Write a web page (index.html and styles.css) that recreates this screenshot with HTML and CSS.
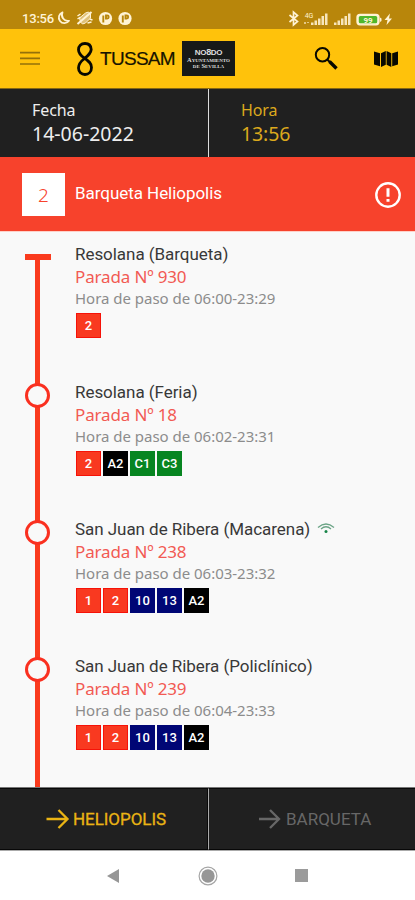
FILE: index.html
```
<!DOCTYPE html>
<html lang="es">
<head>
<meta charset="utf-8">
<title>TUSSAM</title>
<link rel="stylesheet" href="styles.css">
</head>
<body>
<div class="status">
  <span class="clock">13:56</span>
  <svg class="status-left" width="80" height="16" viewBox="0 0 80 16">
    <path d="M6.500 2.300A5.600 5.600 0 1 0 13 10.800 6 6 0 0 1 6.500 2.300z" fill="none" stroke="#fff3d5" stroke-width="1.800" stroke-linejoin="round"/>
    <g transform="translate(20.500 0)" fill="none" stroke="#fff3d5"><path d="M3 8l6-5 3-1 2 2v4l-5 5-3 1-2-2z" fill="#fff3d5" fill-opacity=".55" stroke-width="1"/><path d="M1 14L15 2" stroke-width="2"/><path d="M1 6l3-2M1 9l3-2M11 13l4-1M13 9l3 1" stroke-width="1.500"/></g>
    <circle cx="49.500" cy="8.500" r="6.600" fill="#fff3d5"/><path d="M47.300 12.500V5.500M50 5.500h1.200a1.500 1.500 0 0 1 0 3H50z" fill="none" stroke="#b8860b" stroke-width="1.900"/>
    <circle cx="69" cy="8.500" r="6.600" fill="#fff3d5"/><path d="M66.800 12.500V5.500M69.500 5.500h1.200a1.500 1.500 0 0 1 0 3h-1.200z" fill="none" stroke="#b8860b" stroke-width="1.900"/>
  </svg>
  <svg class="status-right" width="110" height="18" viewBox="0 0 110 18">
    <path d="M1.500 6l8 6.500L5.500 16V3l4 3.500-8 6.500" fill="none" stroke="#fff3d5" stroke-width="1.700"/>
    <g fill="#fff3d5"><path d="M23 13.500h2.500V16H23zM26.500 11.500H29V16h-2.500zM30 9.500h2.500V16H30zM33.500 7H36v9h-2.500zM37 4.500h2.500V16H37zM46 13.500h2.500V16H46zM49.500 11.500H52V16h-2.500zM53 9.500h2.500V16H53zM56.500 7H59v9h-2.500zM60 4.500h2.500V16H60z" opacity=".88"/>
    <text x="21" y="9" class="network">4G</text><path d="M16 13h2v2h-2zM19 13h2v1h-2z" opacity=".6"/></g>
    <rect x="69" y="5.300" width="22" height="10.500" rx="3" fill="#fff3d5" stroke="#fff3d5" stroke-width="1.300"/><path d="M92 8.500l1.500 1v2.500l-1.500 1z" fill="#fff3d5"/><rect x="70.800" y="6.900" width="18.400" height="7.300" rx="1.500" fill="#4fb72b"/><text x="80" y="13.500" class="charge">99</text>
    <path d="M102 4.500l-5.500 6.500h3l-1 5 5.500-6.500h-3z" fill="#fff3d5"/>
  </svg>
</div>
<header class="appbar">
  <svg class="menu" width="20" height="16" viewBox="0 0 20 16"><path d="M0 1.700h20M0 7.300h20M0 13h20" stroke="#94710a" stroke-width="1.700"/></svg>
  <svg class="mark" width="18" height="36" viewBox="0 0 18 36"><path d="M15.200 8.500C15 4.500 12.500 2.500 9 2.500c-4 0-6.500 2.500-6.500 6.200 0 4 2.500 6 6 8.500 4 2.800 7 5 7 9.300S12.500 33.500 9 33.500s-6.500-2.500-6.500-6.500 2.700-7 6-9.500c4-3 6.300-5 6.700-9z" fill="none" stroke="#080800" stroke-width="2.800"/></svg>
  <span class="brand">TUSSAM</span>
  <div class="council"><b>NO<span class="skein">8</span>DO</b><span>Ayuntamiento</span><span>de Sevilla</span></div>
  <svg class="search" width="26" height="26" viewBox="0 0 26 26"><circle cx="8.500" cy="8.800" r="6.700" fill="none" stroke="#080800" stroke-width="2"/><path d="M13.300 13.500l3 3" stroke="#080800" stroke-width="2"/><path d="M15.500 15.500l7 7" stroke="#080800" stroke-width="3.400"/></svg>
  <svg class="map" width="24" height="18" viewBox="0 0 24 18"><path d="M0 1.500l6 1.700v13L0 14.500zM7 3.200l4.800-2.200v13.700L7 16.900zM12.600 1l4.700 2.200v13.700l-4.700-2.200zM18.200 3.200l5.800-1.700v13l-5.800 1.700z" fill="#080800"/></svg>
</header>
<section class="moment">
  <div><span class="label">Fecha</span><span class="value date">14-06-2022</span></div>
  <div class="gold"><span class="label">Hora</span><span class="value">13:56</span></div>
</section>
<section class="line">
  <span class="number">2</span><span class="route">Barqueta Heliopolis</span>
  <svg width="28" height="28" viewBox="0 0 28 28"><circle cx="14" cy="14" r="11.700" fill="none" stroke="#fff" stroke-width="2.400"/><path d="M14 7.200v8.500M14 17.900v2.800" stroke="#fff" stroke-width="3"/></svg>
</section>
<main class="stops">
  <article class="stop first"><div class="track"><i></i></div><div class="info">
    <h2>Resolana (Barqueta)</h2><p class="parada">Parada Nº 930</p><p class="hours">Hora de paso de 06:00-23:29</p>
    <div class="tags"><b>2</b></div></div></article>
  <article class="stop"><div class="track"><i></i></div><div class="info">
    <h2>Resolana (Feria)</h2><p class="parada">Parada Nº 18</p><p class="hours">Hora de paso de 06:02-23:31</p>
    <div class="tags"><b>2</b><b class="black">A2</b><b class="green">C1</b><b class="green">C3</b></div></div></article>
  <article class="stop"><div class="track"><i></i></div><div class="info">
    <h2>San Juan de Ribera (Macarena)<svg class="wifi" width="18" height="14" viewBox="0 0 18 14"><path d="M1 5.500Q9-1.500 17 5.500M4 7q5-4.500 10 0" fill="none" stroke="#6ba486" stroke-width="1.300"/><circle cx="9" cy="9.500" r="1.500" fill="#168447"/></svg></h2><p class="parada">Parada Nº 238</p><p class="hours">Hora de paso de 06:03-23:32</p>
    <div class="tags"><b>1</b><b>2</b><b class="navy">10</b><b class="navy">13</b><b class="black">A2</b></div></div></article>
  <article class="stop last"><div class="track"><i></i></div><div class="info">
    <h2>San Juan de Ribera (Policlínico)</h2><p class="parada">Parada Nº 239</p><p class="hours">Hora de paso de 06:04-23:33</p>
    <div class="tags"><b>1</b><b>2</b><b class="navy">10</b><b class="navy">13</b><b class="black">A2</b></div></div></article>
</main>
<nav class="directions">
  <div class="active"><svg width="24" height="22" viewBox="0 0 24 22"><path d="M.5 11h20.500M12.500 2l9 9-9 9" fill="none" stroke="currentColor" stroke-width="2.300"/></svg><span>HELIOPOLIS</span></div>
  <div><svg width="24" height="22" viewBox="0 0 24 22"><path d="M0 11h20.500M11 2l9 9-9 9" fill="none" stroke="currentColor" stroke-width="2.300"/></svg><span>BARQUETA</span></div>
</nav>
<footer class="system">
  <svg width="13" height="16" viewBox="0 0 13 16"><path d="M0 8L12 1v14z" fill="#969696"/></svg>
  <svg width="20" height="20" viewBox="0 0 20 20"><circle cx="10" cy="10" r="8.900" fill="none" stroke="#a5a5a5" stroke-width="1.200"/><circle cx="10" cy="10" r="6.700" fill="#969696"/></svg>
  <svg width="13" height="13" viewBox="0 0 13 13"><path d="M0 0h13v13H0z" fill="#9b9b9b"/></svg>
</footer>
</body>
</html>
```
FILE: styles.css
```
* { box-sizing: border-box; }
body { margin: 0; width: 415px; height: 900px; overflow: hidden; background: #fff; font-family: Roboto, sans-serif; display: flex; flex-direction: column; }
h2, p { margin: 0; font-weight: 400; white-space: nowrap; }
svg { display: block; flex: none; }
.status { height: 29px; background: #b8860b; display: flex; padding: 10px 0 0 22px; color: #fff3d5; flex: none; }
.clock { width: 34px; font-size: 13px; line-height: 18px; font-weight: 500; letter-spacing: -.2px; }
.status-right { margin: -1px 0 0 152px; }
.network { font: 7px Roboto, sans-serif; text-anchor: middle; }
.charge { font: bold 8px Roboto, sans-serif; fill: #fff3d5; text-anchor: middle; }
.appbar { height: 60px; background: #ffc20b; display: flex; align-items: center; padding: 0 17px 0 20px; border-bottom: 1px solid #866713; flex: none; }
.mark { margin-left: 36px; }
.brand { margin-left: 6px; width: 76px; font: 19px "Liberation Sans", sans-serif; letter-spacing: -.7px; color: #171300; -webkit-text-stroke: .2px #171300; }
.council { margin-left: 6px; width: 53px; height: 35px; background: #171918; color: #ddd; display: flex; flex-direction: column; align-items: center; justify-content: center; font: bold 5.5px/6px "Liberation Serif", serif; font-variant: small-caps; white-space: nowrap; letter-spacing: 0; }
.council b { font: bold 8px/9px "Liberation Sans", sans-serif; letter-spacing: -.3px; }
.council span { font-size: 6.5px; }
.council .skein { font-size: 9px; }
.search { margin-left: 79px; }
.map { margin-left: auto; }
.moment { height: 68px; background: #202020; display: flex; font-family: "Noto Sans", sans-serif; color: #eee; flex: none; }
.moment div { width: 208px; padding: 11px 0 0 32px; display: flex; flex-direction: column; }
.moment div + div { width: 207px; border-left: 1px solid #ddd; }
.moment .gold { color: #dca91d; }
.label { font-size: 16px; line-height: 21px; letter-spacing: -.1px; }
.value { font-size: 19.500px; line-height: 26px; }
.moment .gold .value { letter-spacing: -.1px; }
.line { height: 75px; background: #f7422c; border-bottom: 1px solid #ffd1c9; display: flex; align-items: center; padding: 0 13px 0 22px; color: #fff; flex: none; }
.number { width: 43px; height: 43px; background: #fff; color: #f7422c; font: 19px/44px "Noto Sans", sans-serif; font-weight: 300; text-align: center; }
.route { margin: -2px 0 0 10px; font-size: 17px; letter-spacing: -.05px; }
.line svg { margin-left: auto; margin-top: 1px; }
.stops { height: 555px; background: #f9f9f9; overflow: hidden; padding-top: 12.400px; flex: none; }
.stop { display: flex; height: 137.300px; }
.track { width: 75px; margin-top: -12px; background: linear-gradient(#fa3b1e, #fa3b1e) 35px 0 / 5px 100% no-repeat; height: 138px; padding: 13px 0 0 25px; }
.track i { display: block; width: 25px; height: 25px; border: 3px solid #fa3020; border-radius: 50%; background: #f9f9f9; }
.last .track { height: 160px; }
.first .track { background-position: 35px 10px; margin-top: 0; padding-top: 10px; height: 127px; }
.first .track i { width: 26px; height: 6px; border: 0; border-radius: 0; background: #fa3b1e; }
.info { flex: 1; }
h2 { height: 21px; font-size: 17px; line-height: 21px; letter-spacing: -.05px; color: #383838; display: flex; align-items: center; }
.wifi { margin-left: 7px; }
.parada { font: 17px/23px "Noto Sans", sans-serif; letter-spacing: -.15px; color: #f25a53; }
.hours { font: 15px/20px "Noto Sans", sans-serif; letter-spacing: -.02px; color: #8c8c8c; }
.tags { display: flex; gap: 2px; margin: 5px 0 0 1px; }
.tags b { width: 25px; height: 25px; background: #f93920; border: 1px solid #f61208; color: #fff; font-size: 13px; line-height: 24px; font-weight: 500; text-align: center; }
.tags .black { background: #000; border-color: #000; }
.tags .green { background: #078521; border-color: #078521; }
.tags .navy { background: #000675; border-color: #000675; }
.directions { height: 64px; display: flex; border-top: 1px solid #777; border-bottom: 1px solid #aaa; color: #676767; flex: none; }
.directions div { width: 208px; background: #202020; border: 1px solid #080808; border-left: 0; display: flex; align-items: center; padding: 0 0 0 46px; font-size: 17px; }
.directions div + div { width: 207px; border-left: 1px solid #aaa; border-right: 0; padding-left: 50px; }
.directions .active { color: #eab414; letter-spacing: -.05px; -webkit-text-stroke: .3px #eab414; }
.directions span { margin-left: 3px; }
.system { height: 49px; display: flex; align-items: center; padding-left: 107px; background: #fff; flex: none; }
.system svg + svg { margin-left: 78px; }
.system svg + svg + svg { margin-left: 77px; }
```
